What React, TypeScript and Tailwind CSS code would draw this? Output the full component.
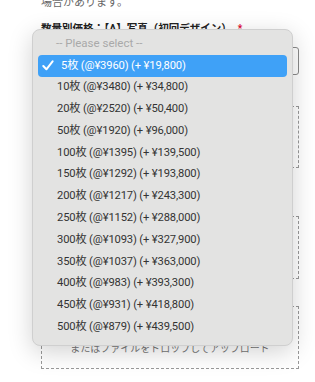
const options = [
  "5枚 (@¥3960) (+ ¥19,800)",
  "10枚 (@¥3480) (+ ¥34,800)",
  "20枚 (@¥2520) (+ ¥50,400)",
  "50枚 (@¥1920) (+ ¥96,000)",
  "100枚 (@¥1395) (+ ¥139,500)",
  "150枚 (@¥1292) (+ ¥193,800)",
  "200枚 (@¥1217) (+ ¥243,300)",
  "250枚 (@¥1152) (+ ¥288,000)",
  "300枚 (@¥1093) (+ ¥327,900)",
  "350枚 (@¥1037) (+ ¥363,000)",
  "400枚 (@¥983) (+ ¥393,300)",
  "450枚 (@¥931) (+ ¥418,800)",
  "500枚 (@¥879) (+ ¥439,500)",
];

function Check() {
  return (
    <svg width="12" height="11" viewBox="0 0 12 11" className="shrink-0">
      <path d="M1.3 6 L4.4 9.3 L10.6 1.4" fill="none" stroke="white" strokeWidth="2" strokeLinecap="round" strokeLinejoin="round" />
    </svg>
  );
}

export default function App() {
  return (
    <div className="relative h-[382px] w-[315px] overflow-hidden bg-white font-['Roboto','Noto_Sans_CJK_JP',sans-serif]">
      <div className="px-[41px]">
        <p className="mt-[-5px] text-[11px] leading-[16px] text-[#666]">場合があります。</p>
        <div className="mt-[10px] flex items-start text-[10.5px] font-bold leading-[16px] text-[#222]">
          数量別価格：【A】写真（初回デザイン）
          <span className="ml-[6px] text-[10px] text-[#e0002a]">*</span>
        </div>
        <div className="mt-[10px] h-[28px] w-[258px] rounded-[3px] border border-[#8a8a8a]" />
        <div className="mt-[31px] h-[62px] w-[258px] border border-dashed border-[#999]" />
        <div className="mt-[48px] h-[63px] w-[258px] border border-dashed border-[#999]" />
        <div className="mt-[27px] flex h-[63px] w-[258px] items-start justify-center border border-dashed border-[#999] pt-[35px]">
          <span className="text-[10px] leading-[14px] text-[#777]">またはファイルをドロップしてアップロード</span>
        </div>
      </div>

      <div className="absolute left-[32px] top-[29px] w-[261px] rounded-[8px] border border-[#cfcfcf] bg-[#e3e3e2] px-[5px] pb-[7px] pt-[3px] shadow-[0_6px_24px_rgba(0,0,0,0.18)]">
        <div className="flex h-[22px] items-center pl-[18px] text-[11.5px] text-[#a9a9a9]">-- Please select --</div>
        {options.map((o, i) => (
          <div
            key={o}
            className={
              i === 0
                ? "flex h-[21.8px] items-center gap-[7px] rounded-[4px] bg-[#3fa1f7] pl-[4px] text-[11.2px] tracking-[-0.15px] text-white"
                : "flex h-[21.8px] items-center pl-[19px] text-[11.2px] tracking-[-0.15px] text-[#333]"
            }
          >
            {i === 0 && <Check />}
            {o}
          </div>
        ))}
      </div>
    </div>
  );
}
